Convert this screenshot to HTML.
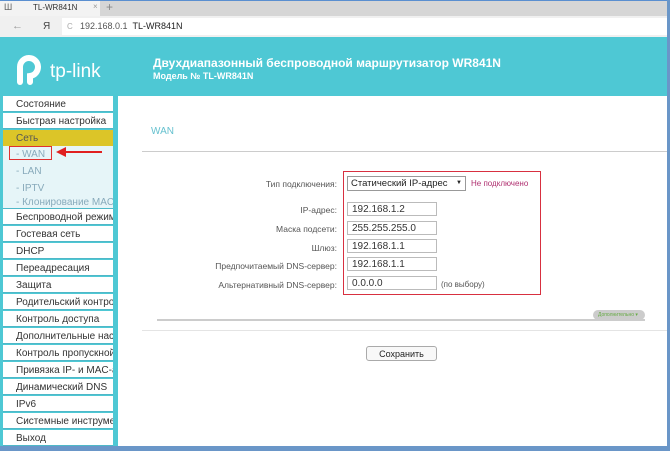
<!DOCTYPE html>
<html><head><meta charset="utf-8"><style>
*{margin:0;padding:0;box-sizing:border-box}
body{width:670px;height:451px;overflow:hidden;background:#fff;font-family:"Liberation Sans",Arial,sans-serif;position:relative}
.a{position:absolute}
.sb div{position:absolute;left:3px;width:110px;height:16px;background:#fff;font-size:10px;color:#333;padding:3px 0 0 13px;white-space:nowrap;overflow:hidden;border-bottom:1px solid #4fb8c8}
.sb div.sub{background:#e6f5f8;color:#8ab;border-bottom:none}
.lbl{position:absolute;font-size:8.5px;color:#555;text-align:right;width:132px;left:205px}
.inp{position:absolute;left:347px;width:90px;height:14px;border:1px solid #bbb;font-size:10px;color:#333;padding:1px 4px}
</style></head><body>
<div class="a" style="left:0;top:0;width:670px;height:16px;background:#d6d6d6;border-top:1px solid #5a8fd0"></div>
<div class="a" style="left:0;top:1px;width:100px;height:15px;background:#f3f3f3"></div>
<div class="a" style="left:4px;top:2px;font-size:9px;color:#666">Ш</div>
<div class="a" style="left:33px;top:3px;font-size:8px;color:#333">TL-WR841N</div>
<div class="a" style="left:93px;top:2px;font-size:8px;color:#999">×</div>
<div class="a" style="left:106px;top:0px;font-size:12px;color:#888">+</div>
<div class="a" style="left:0;top:16px;width:670px;height:21px;background:#f0f0f0"></div>
<div class="a" style="left:62px;top:18px;width:608px;height:17px;background:#fff"></div>
<div class="a" style="left:12px;top:20px;font-size:11px;color:#999">←</div>
<div class="a" style="left:43px;top:21px;font-size:10px;color:#444">Я</div>
<div class="a" style="left:67px;top:22px;font-size:8px;color:#aaa">C</div>
<div class="a" style="left:80px;top:21px;font-size:9px;color:#555">192.168.0.1 <span style="color:#222">&nbsp;TL-WR841N</span></div>
<div class="a" style="left:0;top:37px;width:668px;height:414px;background:#4ec8d4"></div>
<div class="a" style="left:667px;top:0;width:3px;height:451px;background:#6a96c8"></div>
<div class="a" style="left:0;top:446px;width:670px;height:5px;background:#6a96c8"></div>
<svg class="a" style="left:14px;top:55px" width="36" height="32" viewBox="0 0 36 32"><path d="M6 12 A9 9 0 1 1 16 21 L16 27" stroke="#fff" stroke-width="6" fill="none" stroke-linecap="round"/><path d="M6 13 L6 27" stroke="#fff" stroke-width="6" stroke-linecap="round"/><circle cx="15" cy="12" r="2.6" fill="#4ec8d4"/></svg>
<div class="a" style="left:50px;top:61px;font-size:19px;color:#fff">tp-link</div>
<div class="a" style="left:153px;top:56px;font-size:12px;font-weight:bold;color:#fff">Двухдиапазонный беспроводной маршрутизатор WR841N</div>
<div class="a" style="left:153px;top:71px;font-size:9px;font-weight:bold;color:#fff">Модель № TL-WR841N</div>
<div class="a" style="left:118px;top:96px;width:549px;height:350px;background:#fff"></div>
<div class="a" style="left:151px;top:126px;font-size:10px;color:#66c1cf">WAN</div>
<div class="a" style="left:142px;top:151px;width:525px;height:1px;background:#ccc"></div>
<div class="sb">
<div style="top:96px">Состояние</div>
<div style="top:113px">Быстрая настройка</div>
<div style="top:130px;background:#dcc528;color:#555;border-bottom:none">Сеть</div>
<div class="sub" style="top:146px;height:17px">- WAN</div>
<div class="sub" style="top:163px;height:17px">- LAN</div>
<div class="sub" style="top:180px;height:17px">- IPTV</div>
<div class="sub" style="top:197px;padding-top:0;border-bottom:1px solid #4fb8c8;height:12px">- Клонирование MAC-адреса</div>
<div style="top:209px">Беспроводной режим</div>
<div style="top:226px">Гостевая сеть</div>
<div style="top:243px">DHCP</div>
<div style="top:260px">Переадресация</div>
<div style="top:277px">Защита</div>
<div style="top:294px">Родительский контроль</div>
<div style="top:311px">Контроль доступа</div>
<div style="top:328px">Дополнительные настройки</div>
<div style="top:345px">Контроль пропускной способности</div>
<div style="top:362px">Привязка IP- и MAC-адресов</div>
<div style="top:379px">Динамический DNS</div>
<div style="top:396px">IPv6</div>
<div style="top:413px">Системные инструменты</div>
<div style="top:430px">Выход</div>
</div>
<div class="a" style="left:9px;top:146px;width:43px;height:14px;border:1px solid #e03030"></div>
<svg class="a" style="left:54px;top:146px" width="50" height="12"><path d="M48 6 H8" stroke="#e02020" stroke-width="2"/><path d="M2 6 L12 1 L12 11 Z" fill="#e02020"/></svg>
<div class="lbl" style="top:179px">Тип подключения:</div>
<div class="a" style="left:347px;top:176px;width:119px;height:15px;border:1px solid #999;font-size:9.5px;color:#222;padding:1px 3px;white-space:nowrap">Статический IP-адрес</div>
<div class="a" style="left:456px;top:180px;font-size:6px;color:#222">▼</div>
<div class="a" style="left:471px;top:179px;font-size:8px;color:#b03070">Не подключено</div>
<div class="lbl" style="top:205px">IP-адрес:</div>
<div class="inp" style="top:202px">192.168.1.2</div>
<div class="lbl" style="top:224px">Маска подсети:</div>
<div class="inp" style="top:221px">255.255.255.0</div>
<div class="lbl" style="top:243px">Шлюз:</div>
<div class="inp" style="top:239px">192.168.1.1</div>
<div class="lbl" style="top:261px">Предпочитаемый DNS-сервер:</div>
<div class="inp" style="top:257px">192.168.1.1</div>
<div class="lbl" style="top:280px">Альтернативный DNS-сервер:</div>
<div class="inp" style="top:276px">0.0.0.0</div>
<div class="a" style="left:441px;top:280px;font-size:8px;color:#555">(по выбору)</div>
<div class="a" style="left:343px;top:171px;width:198px;height:124px;border:1.5px solid #d83040"></div>
<div class="a" style="left:157px;top:319px;width:488px;height:2px;background:#ccc"></div>
<div class="a" style="left:593px;top:310px;width:52px;height:10px;background:#ccc;border-radius:5px;font-size:5px;color:#6a4;padding:2px 0 0 5px">Дополнительно ▾</div>
<div class="a" style="left:142px;top:330px;width:525px;height:1px;background:#e4e4e4"></div>
<div class="a" style="left:366px;top:346px;width:71px;height:15px;border:1px solid #aaa;border-radius:3px;background:#f8f8f8;font-size:9px;color:#222;text-align:center;padding-top:2px">Сохранить</div>
</body></html>
